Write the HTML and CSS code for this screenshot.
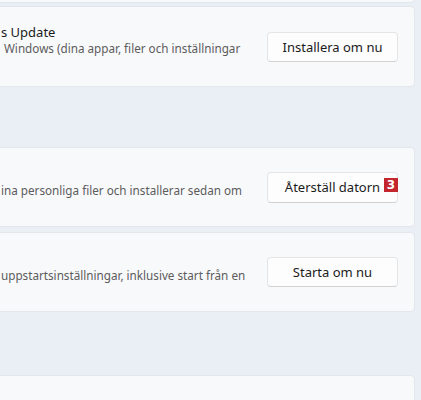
FILE: index.html
```html
<!DOCTYPE html>
<html lang="sv">
<head>
<meta charset="utf-8">
<title>Återställning</title>
<link rel="stylesheet" href="styles.css">
</head>
<body>
<main class="page">
  <div class="card card-partial"></div>

  <div class="card row">
    <div class="text text-titled">
      <div class="title">s Update</div>
      <div class="desc desc-indent">Windows (dina appar, filer och inställningar</div>
    </div>
    <button class="btn">Installera om nu</button>
  </div>

  <div class="section-gap"></div>

  <div class="card row">
    <div class="text text-single">
      <div class="desc">ina personliga filer och installerar sedan om</div>
    </div>
    <div class="btn-wrap">
      <button class="btn">Återställ datorn</button>
      <span class="badge">3</span>
    </div>
  </div>

  <div class="card row card-tight">
    <div class="text text-single">
      <div class="desc">uppstartsinställningar, inklusive start från en</div>
    </div>
    <button class="btn">Starta om nu</button>
  </div>

  <div class="section-gap section-gap-2"></div>

  <div class="card card-bottom"></div>
</main>
</body>
</html>
```

FILE: styles.css
```css
* { box-sizing: border-box; }

html, body {
  margin: 0;
  padding: 0;
  height: 100%;
  overflow: hidden;
}

body {
  background: #eaeff6;
  font-family: "Noto Sans", "Open Sans", sans-serif;
  color: #1b1b1b;
}

.page {
  display: flex;
  flex-direction: column;
  margin-top: -20px;
  margin-left: -11px;
  margin-right: 6px;
}

.card {
  background: #f8f9fb;
  border: 1px solid #e3e6eb;
  border-radius: 4px;
}

.card-partial {
  height: 23px;
  margin-bottom: 3px;
}

.row {
  display: flex;
  align-items: center;
  height: 80px;
  padding: 0 16px 0 11px;
  gap: 18px;
}

.row:nth-child(2) { height: 81px; }

.card-tight { margin-top: 5px; }

.section-gap { height: 60px; }
.section-gap-2 { height: 63px; }

.card-bottom { height: 80px; }

.text {
  flex: 1;
  min-width: 0;
  white-space: nowrap;
}

.text-titled { padding-bottom: 14px; }
.text-single { padding-top: 5px; }

.title {
  font-size: 13px;
  line-height: 17px;
  color: #1b1b1b;
}

.desc {
  font-size: 11.7px;
  line-height: 14px;
  color: #5c5c5c;
}

.desc-indent { padding-left: 3px; }

.btn-wrap {
  position: relative;
  flex-shrink: 0;
}

.btn {
  flex-shrink: 0;
  width: 131px;
  height: 30px;
  background: #fdfdfd;
  border: 1px solid #e5e5e5;
  border-bottom-color: #d2d2d2;
  border-radius: 4px;
  font-family: inherit;
  font-size: 13px;
  color: #1b1b1b;
  padding: 0;
}

.btn-wrap .btn { height: 31px; display: block; }

.badge {
  position: absolute;
  left: 117px;
  top: 6px;
  width: 14px;
  height: 14px;
  background: #c4262e;
  color: #fff;
  font-family: "DejaVu Sans", sans-serif;
  font-weight: bold;
  font-size: 12px;
  line-height: 14px;
  text-align: center;
}
```
